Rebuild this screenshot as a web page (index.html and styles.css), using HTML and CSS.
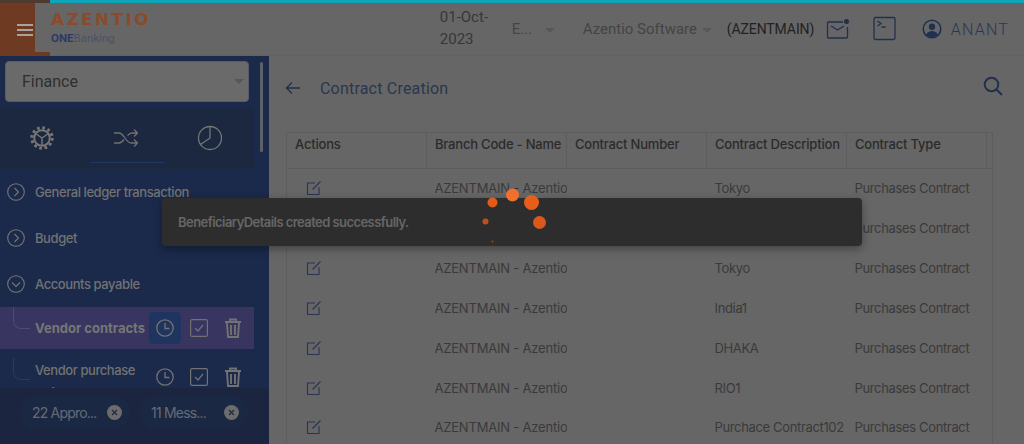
FILE: index.html
```html
<!DOCTYPE html>
<html lang="en">
<head>
<meta charset="utf-8">
<title>Contract Creation</title>
<link rel="stylesheet" href="styles.css">
</head>
<body>
<header class="topbar">
  <div class="brand">
    <button class="burger"><span></span><span></span><span></span></button>
    <div class="logo">
      <div class="logo-main">AZENTIO</div>
      <div class="logo-sub"><b>ONE</b>Banking</div>
    </div>
  </div>
  <div class="top-items">
    <div class="date">01-Oct-<br>2023</div>
    <div class="lang">E...<i class="caret"></i></div>
    <div class="company">Azentio Software<i class="caret"></i></div>
    <div class="branch">(AZENTMAIN)</div>
    <svg class="ico-mail" width="24" height="22" viewBox="0 0 24 22" fill="none" stroke="#22304f" stroke-width="1.3"><path d="M17 4H2.500a1 1 0 0 0-1 1v14a1 1 0 0 0 1 1h18a1 1 0 0 0 1-1V9"/><path d="M5 8l6.500 4L18 8"/><circle cx="20.500" cy="3.500" r="2.500" fill="#22304f" stroke="none"/></svg>
    <svg class="ico-term" width="24" height="26" viewBox="0 0 24 26" fill="none" stroke="#22304f" stroke-width="1.300"><rect x="1" y="1.500" width="21" height="22" rx="1.500"/><path d="M4.500 5l3.500 2.500-3.500 2.500M8.500 11h4"/></svg>
    <svg class="ico-user" width="20" height="20" viewBox="0 0 20 20"><circle cx="10" cy="10" r="8.800" fill="none" stroke="#22304f" stroke-width="1.600"/><circle cx="10" cy="7.800" r="3.200" fill="#22304f"/><path d="M4 16c1-3 3.500-4 6-4s5 1 6 4c-3 3-9 3-12 0z" fill="#22304f"/></svg>
    <div class="user-name">ANANT</div>
  </div>
</header>

<div class="layout">
  <aside class="sidebar">
    <div class="side-scroll"></div>
    <div class="module-select">Finance<i class="caret"></i></div>
    <div class="side-tabs">
      <span class="tab"><svg width="24" height="24" viewBox="0 0 24 24" fill="none" stroke="#767676"><circle cx="12" cy="12" r="10.200" stroke-width="3" stroke-dasharray="2.700 2.640"/><circle cx="12" cy="12" r="7.800" stroke-width="2"/><path d="M12 12V19M12 12l-5.700-4M12 12l5.700-4" stroke-width="1.500"/></svg></span>
      <span class="tab tab-active"><svg width="24" height="20" viewBox="0 0 24 20" fill="none" stroke="#707070" stroke-width="1.300"><path d="M0 5h5c5 0 7 10 12 10h6M0 15h5c2 0 3.500-1.500 5-3.500M13.500 7.500C15 6 16 5 18 5h5M20 1.500 23.500 5 20 8.500M20 11.500l3.500 3.500-3.500 3.500"/></svg></span>
      <span class="tab"><svg width="26" height="26" viewBox="0 0 26 26" fill="none" stroke="#767676" stroke-width="1.300"><circle cx="13" cy="13" r="11.500"/><path d="M13 1.500V13L3.500 19.500"/></svg></span>
    </div>
    <nav class="menu">
      <div class="menu-item"><svg class="chev" width="18" height="18" viewBox="0 0 18 18" fill="none" stroke="#767676" stroke-width="1.100"><circle cx="9" cy="9" r="8.300"/><path d="M7.500 5l4 4-4 4"/></svg>General ledger transaction</div>
      <div class="menu-item"><svg class="chev" width="18" height="18" viewBox="0 0 18 18" fill="none" stroke="#767676" stroke-width="1.100"><circle cx="9" cy="9" r="8.300"/><path d="M7.500 5l4 4-4 4"/></svg>Budget</div>
      <div class="menu-item"><svg class="chev" width="18" height="18" viewBox="0 0 18 18" fill="none" stroke="#767676" stroke-width="1.100"><circle cx="9" cy="9" r="8.300"/><path d="M5 7.500l4 4 4-4"/></svg>Accounts payable</div>
      <div class="sub-item sub-active">
        <span class="tree"></span>
        <span class="sub-label">Vendor contracts</span>
        <div class="sub-actions">
          <span class="act act-on"><svg width="18" height="18" viewBox="0 0 18 18" fill="none" stroke="#727272" stroke-width="1.300"><circle cx="9" cy="9" r="8.200"/><path d="M9 4v5.500h4.500"/></svg></span>
          <span class="act"><svg width="18" height="18" viewBox="0 0 18 18" fill="none" stroke="#727272" stroke-width="1.200"><rect x=".6" y=".6" width="16.800" height="16.800" rx="1.500"/><path d="M5 9l3 3 5-6"/></svg></span>
          <span class="act"><svg width="16" height="20" viewBox="0 0 16 20" fill="none" stroke="#727272" stroke-width="1.900"><path d="M0 4h16M5 3.500V1.500h6v2M2 5l1 14h10l1-14M6 7v10M10 7v10"/></svg></span>
        </div>
      </div>
      <div class="sub-item sub-two">
        <span class="tree"></span>
        <span class="sub-label">Vendor purchase orders</span>
        <div class="sub-actions">
          <span class="act"><svg width="18" height="18" viewBox="0 0 18 18" fill="none" stroke="#727272" stroke-width="1.300"><circle cx="9" cy="9" r="8.200"/><path d="M9 4v5.500h4.500"/></svg></span>
          <span class="act"><svg width="18" height="18" viewBox="0 0 18 18" fill="none" stroke="#727272" stroke-width="1.200"><rect x=".6" y=".6" width="16.800" height="16.800" rx="1.500"/><path d="M5 9l3 3 5-6"/></svg></span>
          <span class="act"><svg width="16" height="20" viewBox="0 0 16 20" fill="none" stroke="#727272" stroke-width="1.900"><path d="M0 4h16M5 3.500V1.500h6v2M2 5l1 14h10l1-14M6 7v10M10 7v10"/></svg></span>
        </div>
      </div>
    </nav>
    <div class="side-foot">
      <div class="chip chip-a"><span>22 Appro...</span><svg width="15" height="15" viewBox="0 0 15 15"><circle cx="7.500" cy="7.500" r="7.500" fill="#6c6c6c"/><path d="M5 5l5 5M10 5l-5 5" stroke="#222c44" stroke-width="1.400"/></svg></div>
      <div class="chip chip-b"><span>11 Mess...</span><svg width="15" height="15" viewBox="0 0 15 15"><circle cx="7.500" cy="7.500" r="7.500" fill="#6c6c6c"/><path d="M5 5l5 5M10 5l-5 5" stroke="#222c44" stroke-width="1.400"/></svg></div>
    </div>
  </aside>

  <main class="content">
    <div class="page-head">
      <svg class="back" width="16" height="14" viewBox="0 0 16 14" fill="none" stroke="#22304f" stroke-width="1.400"><path d="M15 7H2M7 1.500 1.500 7 7 12.500"/></svg>
      <h1>Contract Creation</h1>
      <svg class="search" width="22" height="22" viewBox="0 0 22 22" fill="none" stroke="#22304f" stroke-width="2"><circle cx="9.500" cy="9.500" r="6.800"/><path d="M14.500 14.500 20 20"/></svg>
    </div>
    <table class="grid">
      <thead>
        <tr><th>Actions</th><th>Branch Code - Name</th><th>Contract Number</th><th>Contract Description</th><th>Contract Type</th><th class="tail"></th></tr>
      </thead>
      <tbody>
        <tr><td class="edit"><svg width="16" height="16" viewBox="0 0 16 16" fill="none" stroke="#283552" stroke-width="1.100"><path d="M9 3H1.500v11.500H13V7M6.500 9.500 14.500 1.500"/></svg></td><td class="branch-cell">AZENTMAIN - Azentio</td><td></td><td>Tokyo</td><td>Purchases Contract</td><td class="tail"></td></tr>
        <tr><td class="edit"><svg width="16" height="16" viewBox="0 0 16 16" fill="none" stroke="#283552" stroke-width="1.100"><path d="M9 3H1.500v11.500H13V7M6.500 9.500 14.500 1.500"/></svg></td><td class="branch-cell">AZENTMAIN - Azentio</td><td></td><td>Tokyo</td><td>Purchases Contract</td><td class="tail"></td></tr>
        <tr><td class="edit"><svg width="16" height="16" viewBox="0 0 16 16" fill="none" stroke="#283552" stroke-width="1.100"><path d="M9 3H1.500v11.500H13V7M6.500 9.500 14.500 1.500"/></svg></td><td class="branch-cell">AZENTMAIN - Azentio</td><td></td><td>Tokyo</td><td>Purchases Contract</td><td class="tail"></td></tr>
        <tr><td class="edit"><svg width="16" height="16" viewBox="0 0 16 16" fill="none" stroke="#283552" stroke-width="1.100"><path d="M9 3H1.500v11.500H13V7M6.500 9.500 14.500 1.500"/></svg></td><td class="branch-cell">AZENTMAIN - Azentio</td><td></td><td>India1</td><td>Purchases Contract</td><td class="tail"></td></tr>
        <tr><td class="edit"><svg width="16" height="16" viewBox="0 0 16 16" fill="none" stroke="#283552" stroke-width="1.100"><path d="M9 3H1.500v11.500H13V7M6.500 9.500 14.500 1.500"/></svg></td><td class="branch-cell">AZENTMAIN - Azentio</td><td></td><td>DHAKA</td><td>Purchases Contract</td><td class="tail"></td></tr>
        <tr><td class="edit"><svg width="16" height="16" viewBox="0 0 16 16" fill="none" stroke="#283552" stroke-width="1.100"><path d="M9 3H1.500v11.500H13V7M6.500 9.500 14.500 1.500"/></svg></td><td class="branch-cell">AZENTMAIN - Azentio</td><td></td><td>RIO1</td><td>Purchases Contract</td><td class="tail"></td></tr>
        <tr><td class="edit"><svg width="16" height="16" viewBox="0 0 16 16" fill="none" stroke="#283552" stroke-width="1.100"><path d="M9 3H1.500v11.500H13V7M6.500 9.500 14.500 1.500"/></svg></td><td class="branch-cell">AZENTMAIN - Azentio</td><td></td><td>Purchace Contract102</td><td>Purchases Contract</td><td class="tail"></td></tr>
      </tbody>
    </table>
  </main>
</div>

<div class="toast">BeneficiaryDetails created successfully.</div>
<div class="veil"></div>
<svg class="spinner" width="70" height="60" viewBox="480 186 70 60">
  <circle cx="512.500" cy="195" r="6.500" fill="#f0702e"/>
  <circle cx="531.500" cy="202.500" r="7.500" fill="#e65e1a"/>
  <circle cx="539.500" cy="222.500" r="6.500" fill="#d9581a"/>
  <circle cx="492.500" cy="202.500" r="5" fill="#df5c1b"/>
  <circle cx="485.500" cy="221.500" r="3" fill="#c0501b"/>
  <circle cx="492.500" cy="241.500" r="1" fill="#a04719"/>
</svg>
</body>
</html>
```
FILE: styles.css
```css
* { box-sizing: border-box; }
html, body { margin: 0; height: 100%; }
body {
  height: 444px;
  overflow: hidden;
  background: #666;
  font-family: Inter, Roboto, "Liberation Sans", sans-serif;
  color: #333;
  display: flex;
  flex-direction: column;
  position: relative;
}
.topbar {
  height: 56px;
  flex: none;
  display: flex;
  justify-content: space-between;
  border-top: 3px solid #0fa5b9;
  border-bottom: 1px solid #626262;
  position: relative;
}
.brand { display: flex; position: relative; }
.brand::before {
  content: "";
  position: absolute;
  left: 0;
  top: -3px;
  width: 50px;
  height: 3px;
  background: #4f3a30;
}
.brand::after {
  content: "";
  position: absolute;
  left: 0;
  bottom: -1px;
  width: 50px;
  height: 4px;
  background: #6e3a22;
}
.burger {
  width: 35px;
  height: 53px;
  border: 0;
  background: #6e3a22;
  padding: 0 10px;
  display: flex;
  flex-direction: column;
  justify-content: center;
  gap: 3px;
}
.burger span { display: block; height: 2px; background: #a9a3a0; width: 16px; margin-left: 7px; margin-right: -7px; }
.logo { padding: 10px 0 0 16px; }
.logo-main {
  font-family: "DejaVu Sans", sans-serif;
  font-weight: 700;
  font-size: 15px;
  line-height: 15px;
  letter-spacing: 2.200px;
  color: #8c4a2c;
  transform: scaleX(1.12);
  transform-origin: left;
}
.logo-sub { font-family: Roboto, sans-serif; font-size: 11.500px; line-height: 14px; margin-top: 3px; color: #4a5268; }
.logo-sub b { color: #2a3a66; }
.top-items { display: flex; align-items: center; padding-right: 15px; font-family: Roboto, sans-serif; }
.caret {
  display: inline-block;
  width: 0;
  height: 0;
  border-left: 5px solid transparent;
  border-right: 5px solid transparent;
  border-top: 5px solid #575757;
  vertical-align: middle;
}
.date { font-size: 15px; line-height: 22px; color: #373737; width: 72px; margin-top: -2px; }
.lang { font-size: 15px; color: #454545; width: 71px; }
.lang .caret { margin-left: 13px; }
.company { font-size: 15px; color: #444; width: 144px; white-space: nowrap; }
.company .caret { margin-left: 5px; }
.branch { font-size: 14px; letter-spacing: -0.100px; color: #222; width: 99px; }
.ico-mail { margin-right: 23px; }
.ico-term { margin-right: 25px; }
.ico-user { margin-right: 9px; }
.user-name { font-size: 16px; letter-spacing: 1.200px; font-weight: 300; color: #2a3654; }

.layout { flex: 1; display: flex; min-height: 0; }
.sidebar {
  width: 269px;
  flex: none;
  background: #1b2a4b;
  position: relative;
  overflow: hidden;
  display: flex;
  flex-direction: column;
}
.side-scroll {
  position: absolute;
  left: 260px;
  top: 6px;
  width: 3px;
  height: 90px;
  background: #5e6068;
  border-radius: 2px;
}
.module-select {
  margin: 5px 0 0 5px;
  width: 244px;
  height: 41px;
  flex: none;
  background: #6a6a6a;
  border: 1px solid #585c68;
  border-radius: 4px;
  font-family: Roboto, sans-serif;
  font-size: 16px;
  color: #2f2f2f;
  display: flex;
  align-items: center;
  justify-content: space-between;
  padding: 0 4px 0 16px;
}
.side-tabs {
  margin-top: 5px;
  width: 254px;
  height: 62px;
  flex: none;
  background: #1c2740;
  display: grid;
  grid-template-columns: repeat(3, 84px);
}
.tab { display: flex; align-items: center; justify-content: center; height: 62px; }
.tab-active { position: relative; }
.tab-active::after {
  content: "";
  position: absolute;
  left: 6px;
  right: 3px;
  top: 55px;
  height: 1px;
  background: #1f3763;
}
.menu { flex: 1; }
.menu-item {
  height: 46px;
  display: flex;
  align-items: center;
  gap: 10px;
  padding-left: 7px;
  font-size: 13px;
  font-weight: 500;
  letter-spacing: -0.420px;
  color: #727272;
}
.sub-item {
  position: relative;
  width: 254px;
  height: 42px;
  display: flex;
  align-items: center;
  padding-left: 35px;
  font-size: 13px;
  font-weight: 500;
  letter-spacing: -0.420px;
  color: #727272;
}
.sub-active { background: #383560; font-weight: 700; letter-spacing: 0; color: #767676; }
.sub-two { margin-top: 9px; align-items: flex-start; height: 60px; line-height: 22px; padding-top: 1px; }
.sub-two .sub-label { width: 112px; white-space: normal; }
.tree {
  position: absolute;
  left: 13px;
  top: 0;
  width: 17px;
  height: 22px;
  border-left: 1px solid #2a3a60;
  border-bottom: 1px solid #2a3a60;
  border-bottom-left-radius: 8px;
}
.sub-active .tree { border-color: #4c4a7c; }
.sub-label { white-space: nowrap; }
.sub-actions { position: absolute; left: 149px; top: 5px; display: flex; }
.sub-two .sub-actions { top: 3px; }
.act { width: 32px; height: 32px; margin-right: 2px; display: flex; align-items: center; justify-content: center; border-radius: 4px; }
.act-on { background: #1f3560; }
.side-foot {
  position: absolute;
  left: 0;
  right: 0;
  bottom: 0;
  height: 56px;
  background: #1b2540;
  display: flex;
  padding: 8px 0 0 20px;
  gap: 10px;
}
.chip {
  height: 33px;
  border-radius: 17px;
  background: #1b2843;
  display: flex;
  align-items: center;
  justify-content: space-between;
  font-size: 14px;
  letter-spacing: -0.800px;
  color: #666b76;
  padding: 0 9px 0 12px;
}
.chip-a { width: 110px; padding-right: 8px; }
.chip-b { width: 108px; padding-left: 11px; padding-right: 9px; }

.content { flex: 1; min-width: 0; padding: 0 31px 0 17px; overflow: hidden; }
.page-head { height: 62px; display: flex; align-items: center; padding-top: 2px; margin-bottom: 14px; }
.back { margin-right: 19px; margin-left: -1px; }
.page-head h1 { flex: 1; margin: 0; font-family: Roboto, sans-serif; font-weight: 400; font-size: 16px; letter-spacing: .2px; color: #2a3650; }
.search { margin-right: -11px; margin-top: -4px; }
.grid { width: 706px; table-layout: fixed; border-collapse: collapse; border: 1px solid #5d5d5d; font-size: 13px; }
.grid th, .grid td { width: 140px; padding: 0 0 0 8px; text-align: left; white-space: nowrap; overflow: hidden; }
.grid th {
  height: 36px;
  vertical-align: top;
  padding-top: 3px;
  font-weight: 500;
  letter-spacing: -0.200px;
  color: #2b2b2b;
  border-right: 1px solid #5d5d5d;
  border-bottom: 1px solid #5d5d5d;
}
.grid td { height: 40px; padding-bottom: 2px; letter-spacing: -0.350px; color: #3a3a3a; }
.grid td.branch-cell { letter-spacing: -0.200px; }
.grid .tail { width: 6px; padding: 0; border-right: 0; }
.grid td.edit { padding-left: 19px; }
.edit svg { display: block; }
.toast {
  position: absolute;
  left: 162px;
  top: 198px;
  width: 700px;
  height: 48px;
  background: #2d2d2d;
  border-radius: 4px;
  box-shadow: 0 3px 10px rgba(0,0,0,.35);
  color: #666;
  font-size: 13px;
  font-weight: 600;
  letter-spacing: -0.560px;
  line-height: 48px;
  padding-left: 16px;
}
.veil {
  position: absolute;
  inset: 0;
  backdrop-filter: blur(.5px);
}
.spinner { position: absolute; left: 480px; top: 186px; }
```
